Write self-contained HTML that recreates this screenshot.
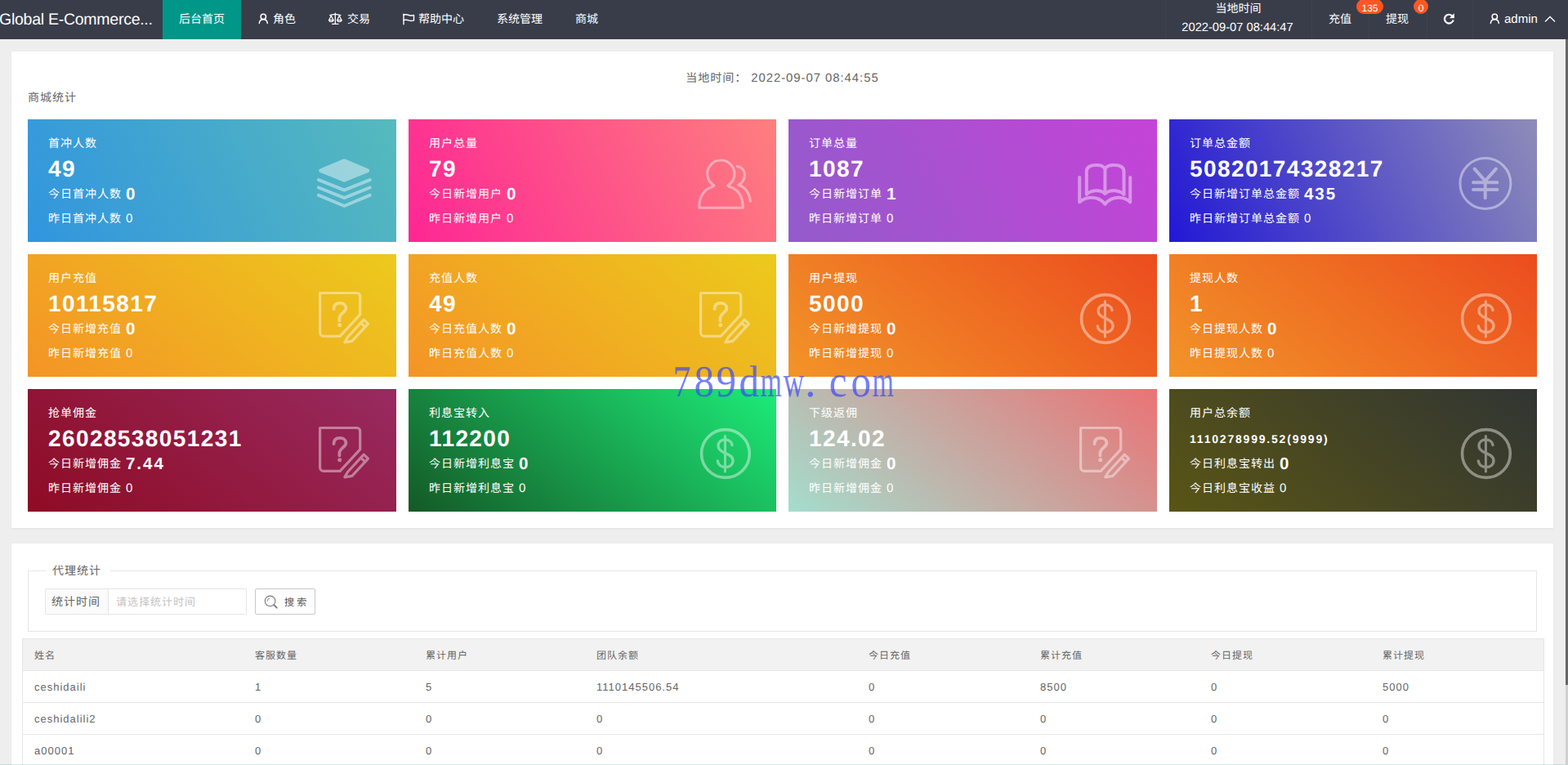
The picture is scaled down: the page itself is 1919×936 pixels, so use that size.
<!DOCTYPE html>
<html lang="zh-CN">
<head>
<meta charset="utf-8">
<title>Global E-Commerce</title>
<style>
*{box-sizing:border-box;margin:0;padding:0}
html,body{width:1919px;height:936px;overflow:hidden}
body{position:relative;background:#eeeeee;font-family:"Liberation Sans","Noto Sans CJK SC",sans-serif;font-size:14px;color:#666;line-height:20px;text-rendering:geometricPrecision;-webkit-font-smoothing:antialiased}
svg{display:block;overflow:visible}
.abs{position:absolute;white-space:nowrap}
.j{display:inline-block;position:relative;vertical-align:top;white-space:nowrap}

/* ---------- top nav ---------- */
.nav{position:absolute;left:0;top:0;width:1919px;height:48px;background:#393d49;color:#fff;overflow:hidden}
.logo{position:absolute;left:-1px;top:0;height:48px;line-height:48px;font-size:19.5px;letter-spacing:-.26px;color:#fff;white-space:nowrap}
.nav .it{position:absolute;top:0;height:48px;line-height:47px;font-size:14px;color:#fff;white-space:nowrap}
.nav .on{background:#009688}
.nav .sep{position:absolute;top:0;width:1px;height:48px;background:rgba(255,255,255,.035)}
.badge{position:absolute;top:-1px;height:18px;line-height:22.600px;border-radius:9px;background:#ff5722;color:#fff;font-size:12px;text-align:center}

/* ---------- panels ---------- */
.panel{position:absolute;background:#fff;box-shadow:0 1px 2px 0 rgba(0,0,0,.06)}
.p1{left:14px;top:63px;width:1887px;height:583px}
.p2{left:14px;top:665px;width:1887px;height:300px}

/* ---------- stat cards ---------- */
.card{position:absolute;width:451px;height:150px;color:#fff;overflow:hidden}
.card div{position:absolute;left:25px;white-space:nowrap;letter-spacing:1px;font-size:14px;line-height:20px}
.card .t{top:19px}
.card .n{top:44px;font-size:28px;line-height:34px;font-weight:bold;letter-spacing:1.4px}
.card .a{top:77px;line-height:28px}
.card .a b{font-size:20.5px;letter-spacing:2px;margin-left:0;position:relative;top:.8px}
.card .y{top:111px}
.card .y i{font-style:normal;margin-left:0;font-size:15px}
.card>svg{position:absolute;left:348px;top:38px;width:80px;height:80px}

/* ---------- panel 2 ---------- */
.fs{position:absolute;left:20px;top:33px;width:1847px;height:75px;border:1px solid #e6e6e6}
.lg{position:absolute;left:42px;top:23px;width:79px;height:20px;line-height:20px;background:#fff;text-align:center;font-size:14px;letter-spacing:1px;padding-right:3px;color:#666;white-space:nowrap}
.lb{position:absolute;left:41px;top:55px;width:78px;height:32px;line-height:30px;border:1px solid #e6e6e6;background:#fbfbfb;text-align:center;font-size:14px;letter-spacing:1px;padding-right:2px;color:#666;white-space:nowrap;border-radius:2px 0 0 2px}
.inp{position:absolute;left:118px;top:55px;width:170px;height:32px;line-height:31px;border:1px solid #e6e6e6;background:#fff;padding-left:9px;font-size:13px;letter-spacing:1px;color:#c3c3c3;white-space:nowrap}
.btn{position:absolute;left:298px;top:55px;width:74px;height:32px;border:1px solid #c9c9c9;border-radius:2px;background:#fff}
.btn>svg{position:absolute;left:10.4px;top:6.5px}
.btn>span{position:absolute;left:35px;top:0;line-height:33px;font-size:12px;color:#555;white-space:nowrap}
.tbl{position:absolute;left:13px;top:116px;width:1863px;border-left:1px solid #e6e6e6;border-right:1px solid #e6e6e6;border-top:1px solid #e6e6e6}
.tr{position:relative;height:39px;border-bottom:1px solid #e6e6e6;background:#fff}
.tr.h{background:#f2f2f2}
.tr>span{position:absolute;top:0;line-height:40px;font-size:13px;letter-spacing:1px;color:#666;white-space:nowrap}
.tr.h>span{font-size:12px}

/* ---------- watermark / scrollbar ---------- */
.wm{position:absolute;left:820.5px;top:437px;height:60px;line-height:60px;font-family:"Liberation Serif",serif;font-size:54.5px;color:rgba(60,72,242,.7);white-space:nowrap}
.wm span{display:inline-block;width:27.43px;text-align:center;transform:scaleX(.9)}
.wm span.w{transform:translateX(-4.6px) scaleX(.62)}
.wm span.w2{transform:translateX(-4.2px) scaleX(.65)}
.wm span.n{transform:scaleX(.8)}
.wm span.d{text-align:left;transform:none}
.sbt{position:absolute;left:1916px;top:48px;width:3px;height:888px;background:#d0d0d0}
.sbh{position:absolute;left:1916px;top:48px;width:3px;height:790px;background:#666}
</style>
</head>
<body>
<svg width="0" height="0" style="position:absolute">
<defs>
<symbol id="i-layers" viewBox="0 0 80 80"><g opacity=".43" fill="#fff" stroke="#fff" stroke-linejoin="round" stroke-linecap="round"><path d="M39.3 12.9L67.600 24.800 39.300 36.300 10.800 24.800z" stroke-width="5"/><path d="M8 36.100L39.300 48.700 70.700 36.100M8 45.500L39.300 58.200 70.700 45.500M8 54.900L39.300 68 70.700 54.900" fill="none" stroke-width="4"/></g></symbol>
<symbol id="i-users" viewBox="0 0 80 80"><g opacity=".42" fill="none" stroke="#fff" stroke-width="3.100" stroke-linejoin="round" stroke-linecap="round"><path d="M7.700 70.200C7.700 56 14 47.500 24.300 44.300L25.800 42.900A16.600 16.600 0 1 1 42.800 42.900L44.100 44.300C56 47.500 61.200 56 61.200 70.200z"/><path d="M54.200 19.400C60 20.600 63.400 24.600 63.400 29.600C63.400 35.400 60 40.200 55.800 42.300C64 45 69 52 70.300 62.300"/></g></symbol>
<symbol id="i-book" viewBox="0 0 80 80"><g opacity=".42" fill="none" stroke="#fff" stroke-width="4" stroke-linejoin="round" stroke-linecap="round"><path d="M16.800 53.700V26C16.800 20 22 18.100 29 18.100C34 18.100 37.500 19.500 39.400 22.500C41.300 19.500 45 18.100 50 18.100C57 18.100 62.500 20 62.500 26V53.700"/><path d="M16.800 53.700C22 49 33 47 39.400 53C46 47 57 49 62.500 53.700M39.400 22.500V53"/><path d="M8.200 33V63.300C16 56 31 55 39.400 65.700C48 55 63 56 70.200 63.300V33"/></g></symbol>
<symbol id="i-yen" viewBox="0 0 80 80"><g opacity=".42" fill="none" stroke="#fff" stroke-linecap="round" stroke-linejoin="round"><circle cx="38.900" cy="40.500" r="31" stroke-width="3"/><path d="M25.600 22.600L38.700 37.300 51.800 22.600M38.700 37.300V58.300M24 39.300H53.400M24 47.900H53.400" stroke-width="4"/></g></symbol>
<symbol id="i-edit" viewBox="0 0 80 80"><g opacity=".42" fill="none" stroke="#fff" stroke-width="3.200" stroke-linejoin="round" stroke-linecap="round"><path d="M9.600 9.500H54.700A4 4 0 0 1 58.700 13.500V35.900L34.200 62.300H14A4.400 4.400 0 0 1 9.600 57.900z"/><path d="M63.200 42.200L68.500 47.100 48.800 68.400 39.800 69.800 43.500 63.500z"/><path d="M59.600 46.100L64.900 51"/><path d="M26.500 29C26.500 23.500 30 21.800 34 21.800C38.500 21.800 41.400 24.500 41.400 28C41.400 33 33.400 34.500 33.400 40.500V43.400" stroke-width="3.800"/><circle cx="33.700" cy="48.700" r="1.200" stroke-width="2.600"/></g></symbol>
<symbol id="i-usd" viewBox="0 0 80 80"><g opacity=".42" fill="none" stroke="#fff" stroke-linecap="round" stroke-linejoin="round"><circle cx="39.900" cy="41" r="29.400" stroke-width="3.600"/><path d="M48 30.500C47.500 26.500 44 24 39.500 24C34.500 24 31 27 31 31.500C31 36.500 35 38.500 39.500 40.300C44.500 42.300 49 44.500 49 49.500C49 54.500 45 57.500 39.500 57.500C34.500 57.500 30.800 54.500 30.300 50" stroke-width="3.400"/><path d="M39.400 19.500V63" stroke-width="3"/></g></symbol>
</defs>
</svg>

<div class="nav">
  <div class="logo">Global E-Commerce...</div>
  <div class="it on" style="left:199px;width:96px;text-align:center"><span class="j">后台首页</span></div>
  <svg class="abs" style="left:315px;top:15px" width="15" height="15" viewBox="0 0 15 15"><g fill="none" stroke="#fff" stroke-width="1.5" stroke-linecap="round"><circle cx="7.3" cy="5.4" r="3.2"/><path d="M2.3 13.4c.3-2.6 2.300-4.600 5-4.600s4.700 2 5 4.600"/></g></svg>
  <div class="it" style="left:334px"><span class="j">角色</span></div>
  <svg class="abs" style="left:401px;top:15px" width="19" height="16" viewBox="0 0 19 16"><g fill="none" stroke="#fff" stroke-width="1.3" stroke-linecap="round" stroke-linejoin="round"><path d="M9.3 1.2v12.800M5.600 14.400h7.400M2.600 3.600c2.400 0 4.300-1.300 6.700-1.300s4.300 1.300 6.700 1.300"/><path d="M4.300 4.200L1.600 9.700h5.400zM14.300 4.200l-2.700 5.500h5.400z"/><path d="M1.600 9.700c.4 1.400 1.400 2 2.700 2s2.300-.6 2.700-2M11.600 9.700c.4 1.400 1.400 2 2.700 2s2.300-.6 2.700-2"/></g></svg>
  <div class="it" style="left:425px"><span class="j">交易</span></div>
  <svg class="abs" style="left:492px;top:16px" width="17" height="15" viewBox="0 0 17 15"><g fill="none" stroke="#fff" stroke-width="1.4" stroke-linecap="round" stroke-linejoin="round"><path d="M2 1.200v12.600"/><path d="M2 2.300c2.200-.9 4.200-.5 6.200.2s4 .8 6.300 0v6.400c-2.300.8-4.300.7-6.300 0s-4-1.100-6.200-.2"/></g></svg>
  <div class="it" style="left:512px"><span class="j">帮助中心</span></div>
  <div class="it" style="left:608px"><span class="j">系统管理</span></div>
  <div class="it" style="left:704px"><span class="j">商城</span></div>

  <div class="sep" style="left:1426px"></div>
  <div class="sep" style="left:1605px"></div>
  <div class="sep" style="left:1675px"></div>
  <div class="sep" style="left:1746px"></div>
  <div class="sep" style="left:1802px"></div>
  <div class="abs" style="left:1426px;width:179px;top:0;text-align:center;font-size:14px;line-height:20px;color:#fff"><span class="j">当地时间</span></div>
  <div class="abs" style="left:1425px;width:179px;top:23.8px;text-align:center;font-size:14.7px;line-height:20px;color:#fff">2022-09-07 08:44:47</div>
  <div class="it" style="left:1626px"><span class="j">充值</span></div>
  <div class="badge" style="left:1660px;width:33px">135</div>
  <div class="it" style="left:1696px"><span class="j">提现</span></div>
  <div class="badge" style="left:1730px;width:18px">0</div>
  <svg class="abs" style="left:1765px;top:15px" width="16" height="16" viewBox="0 0 16 16"><path d="M12.600 4.800A5.400 5.400 0 1 0 13.600 9.400" fill="none" stroke="#fff" stroke-width="2.200"/><path d="M14.800 1.200v6h-6z" fill="#fff"/></svg>
  <svg class="abs" style="left:1822px;top:15px" width="15" height="15" viewBox="0 0 15 15"><g fill="none" stroke="#fff" stroke-width="1.5" stroke-linecap="round"><circle cx="7.3" cy="5.4" r="3.2"/><path d="M2.3 13.4c.3-2.6 2.300-4.600 5-4.600s4.700 2 5 4.600"/></g></svg>
  <div class="it" style="left:1841px;font-size:15px;line-height:48.200px">admin</div>
  <svg class="abs" style="left:1890px;top:19px" width="14" height="9" viewBox="0 0 14 9"><path d="M1 7.500L7 1.500l6 6" fill="none" stroke="#fff" stroke-width="1.400"/></svg>
</div>

<div class="panel p1">
  <div class="abs" style="left:0;width:1887px;top:22px;text-align:center;font-size:14px;letter-spacing:1px;color:#666"><span class="j">当地时间：</span> <span style="font-size:14.8px">2022-09-07 08:44:55</span></div>
  <div class="abs" style="left:20px;top:46px;font-size:14px;letter-spacing:1px;color:#666"><span class="j">商城统计</span></div>
  <div class="card" style="left:20px;top:83px;width:451px;background:linear-gradient(64deg,#3195df,#56babd)">
    <div class="t"><span class="j">首冲人数</span></div>
    <div class="n">49</div>
    <div class="a"><span class="j">今日首冲人数</span> <b>0</b></div>
    <div class="y"><span class="j">昨日首冲人数</span> <i>0</i></div>
    <svg><use href="#i-layers"/></svg>
  </div>
  <div class="card" style="left:486px;top:83px;width:450px;background:linear-gradient(64deg,#fe2694,#fe7f7f)">
    <div class="t"><span class="j">用户总量</span></div>
    <div class="n">79</div>
    <div class="a"><span class="j">今日新增用户</span> <b>0</b></div>
    <div class="y"><span class="j">昨日新增用户</span> <i>0</i></div>
    <svg><use href="#i-users"/></svg>
  </div>
  <div class="card" style="left:951px;top:83px;width:451px;background:linear-gradient(64deg,#935bcb,#c543d8)">
    <div class="t"><span class="j">订单总量</span></div>
    <div class="n">1087</div>
    <div class="a"><span class="j">今日新增订单</span> <b>1</b></div>
    <div class="y"><span class="j">昨日新增订单</span> <i>0</i></div>
    <svg><use href="#i-book"/></svg>
  </div>
  <div class="card" style="left:1417px;top:83px;width:450px;background:linear-gradient(64deg,#2218d5,#8e8cb8)">
    <div class="t"><span class="j">订单总金额</span></div>
    <div class="n">50820174328217</div>
    <div class="a"><span class="j">今日新增订单总金额</span> <b>435</b></div>
    <div class="y"><span class="j">昨日新增订单总金额</span> <i>0</i></div>
    <svg><use href="#i-yen"/></svg>
  </div>
  <div class="card" style="left:20px;top:248px;width:451px;background:linear-gradient(39deg,#f49426,#ecca1c)">
    <div class="t"><span class="j">用户充值</span></div>
    <div class="n">10115817</div>
    <div class="a"><span class="j">今日新增充值</span> <b>0</b></div>
    <div class="y"><span class="j">昨日新增充值</span> <i>0</i></div>
    <svg><use href="#i-edit"/></svg>
  </div>
  <div class="card" style="left:486px;top:248px;width:450px;background:linear-gradient(39deg,#f49426,#ecca1c)">
    <div class="t"><span class="j">充值人数</span></div>
    <div class="n">49</div>
    <div class="a"><span class="j">今日充值人数</span> <b>0</b></div>
    <div class="y"><span class="j">昨日充值人数</span> <i>0</i></div>
    <svg><use href="#i-edit"/></svg>
  </div>
  <div class="card" style="left:951px;top:248px;width:451px;background:linear-gradient(39deg,#f29428,#ec4c1e)">
    <div class="t"><span class="j">用户提现</span></div>
    <div class="n">5000</div>
    <div class="a"><span class="j">今日新增提现</span> <b>0</b></div>
    <div class="y"><span class="j">昨日新增提现</span> <i>0</i></div>
    <svg><use href="#i-usd"/></svg>
  </div>
  <div class="card" style="left:1417px;top:248px;width:450px;background:linear-gradient(39deg,#f29428,#ec4c1e)">
    <div class="t"><span class="j">提现人数</span></div>
    <div class="n">1</div>
    <div class="a"><span class="j">今日提现人数</span> <b>0</b></div>
    <div class="y"><span class="j">昨日提现人数</span> <i>0</i></div>
    <svg><use href="#i-usd"/></svg>
  </div>
  <div class="card" style="left:20px;top:413px;width:451px;background:linear-gradient(39deg,#8e0b24,#982b61)">
    <div class="t"><span class="j">抢单佣金</span></div>
    <div class="n">26028538051231</div>
    <div class="a"><span class="j">今日新增佣金</span> <b>7.44</b></div>
    <div class="y"><span class="j">昨日新增佣金</span> <i>0</i></div>
    <svg><use href="#i-edit"/></svg>
  </div>
  <div class="card" style="left:486px;top:413px;width:450px;background:linear-gradient(39deg,#145926,#1dec78)">
    <div class="t"><span class="j">利息宝转入</span></div>
    <div class="n">112200</div>
    <div class="a"><span class="j">今日新增利息宝</span> <b>0</b></div>
    <div class="y"><span class="j">昨日新增利息宝</span> <i>0</i></div>
    <svg><use href="#i-usd"/></svg>
  </div>
  <div class="card" style="left:951px;top:413px;width:451px;background:linear-gradient(39deg,#a4ddcd,#ea7375)">
    <div class="t"><span class="j">下级返佣</span></div>
    <div class="n">124.02</div>
    <div class="a"><span class="j">今日新增佣金</span> <b>0</b></div>
    <div class="y"><span class="j">昨日新增佣金</span> <i>0</i></div>
    <svg><use href="#i-edit"/></svg>
  </div>
  <div class="card" style="left:1417px;top:413px;width:450px;background:linear-gradient(39deg,#595515,#313533)">
    <div class="t"><span class="j">用户总余额</span></div>
    <div class="n" style="font-size:14px;letter-spacing:1.8px">1110278999.52(9999)</div>
    <div class="a"><span class="j">今日利息宝转出</span> <b>0</b></div>
    <div class="y"><span class="j">今日利息宝收益</span> <i>0</i></div>
    <svg><use href="#i-usd"/></svg>
  </div>
</div>
<div class="panel p2">
  <div class="fs"></div>
  <div class="lg"><span class="j">代理统计</span></div>
  <div class="lb"><span class="j">统计时间</span></div>
  <div class="inp"><span class="j">请选择统计时间</span></div>
  <div class="btn"><svg width="18" height="18" viewBox="0 0 18 18"><g fill="none" stroke="#777" stroke-width="1.1" stroke-linecap="round"><circle cx="7.600" cy="7.400" r="6.300"/><path d="M12.300 12.100L15.800 15.700" stroke-width="1.800"/><path d="M4.200 7.200A3.300 3.300 0 0 1 6.600 4.100" stroke-width=".9"/></g></svg><span><span class="j">搜 索</span></span></div>
  <div class="tbl">
    <div class="tr h"><span style="left:14px"><span class="j">姓名</span></span><span style="left:284px"><span class="j">客服数量</span></span><span style="left:493px"><span class="j">累计用户</span></span><span style="left:702px"><span class="j">团队余额</span></span><span style="left:1035px"><span class="j">今日充值</span></span><span style="left:1245px"><span class="j">累计充值</span></span><span style="left:1454px"><span class="j">今日提现</span></span><span style="left:1664px"><span class="j">累计提现</span></span></div>
    <div class="tr"><span style="left:14px">ceshidaili</span><span style="left:284px">1</span><span style="left:493px">5</span><span style="left:702px">1110145506.54</span><span style="left:1035px">0</span><span style="left:1245px">8500</span><span style="left:1454px">0</span><span style="left:1664px">5000</span></div>
    <div class="tr"><span style="left:14px">ceshidalili2</span><span style="left:284px">0</span><span style="left:493px">0</span><span style="left:702px">0</span><span style="left:1035px">0</span><span style="left:1245px">0</span><span style="left:1454px">0</span><span style="left:1664px">0</span></div>
    <div class="tr"><span style="left:14px">a00001</span><span style="left:284px">0</span><span style="left:493px">0</span><span style="left:702px">0</span><span style="left:1035px">0</span><span style="left:1245px">0</span><span style="left:1454px">0</span><span style="left:1664px">0</span></div>
  </div>
</div>
<div class="wm"><span class="n">7</span><span>8</span><span>9</span><span>d</span><span class="w">m</span><span class="w2">w</span><span class="d">.</span><span>c</span><span>o</span><span class="w">m</span></div>
<div class="sbt"></div><div class="sbh"></div>
<div style="position:absolute;left:0;top:935px;width:1916px;height:1px;background:rgba(0,150,136,.18)"></div>

</body>
</html>
